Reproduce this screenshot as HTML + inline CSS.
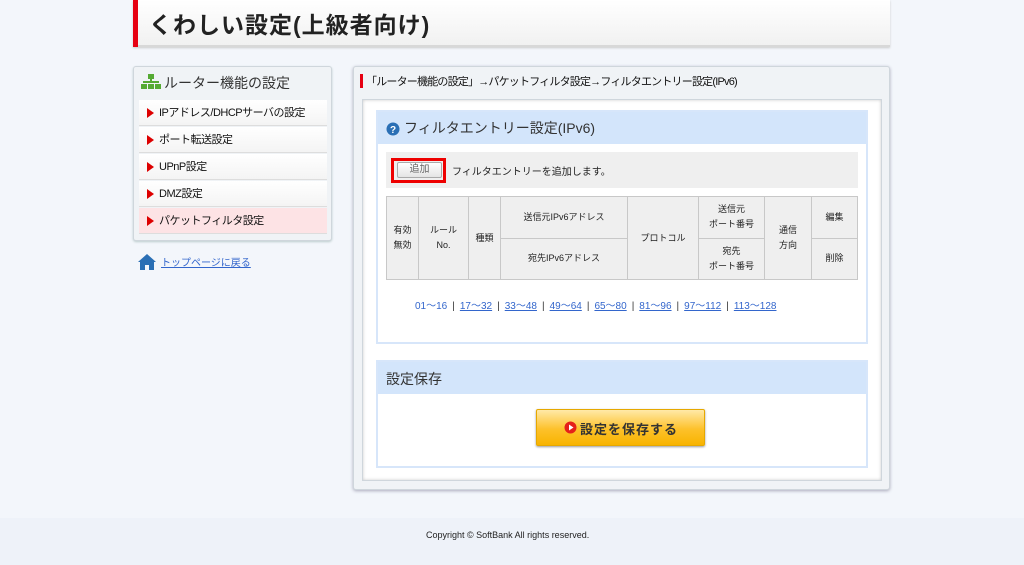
<!DOCTYPE html>
<html><head><meta charset="utf-8"><style>
*{margin:0;padding:0;box-sizing:border-box}
body{width:1024px;height:565px;background:#f3f6fb;font-family:"Liberation Sans","Noto Sans CJK JP",sans-serif;position:relative;overflow:hidden;color:#222}
.a{position:absolute}
.hdr{left:133px;top:0;width:757px;height:47px;background:linear-gradient(#fff,#f1f1f1);border-bottom:2px solid #d8d8d8;box-shadow:0 1px 2px #ccc}
.hdr:before{content:"";position:absolute;left:0;top:0;width:5px;height:47px;background:#e60012}
.hdr span{position:absolute;left:16px;top:6px;font-size:23px;font-weight:bold;color:#222;letter-spacing:1px}
.side{left:133px;top:66px;width:199px;height:175px;background:#f0f3f6;border:1px solid #cfd6dc;border-radius:3px;box-shadow:0 1px 2px #bcc}
.side .t{position:absolute;left:30px;top:6px;font-size:14px;color:#333}
.mi{position:absolute;left:5px;width:188px;height:26px;background:linear-gradient(#fff,#f4f4f4);border-bottom:1px solid #ddd;font-size:11px;line-height:26px;padding-left:20px;color:#111;letter-spacing:-.5px}
.mi:before{content:"";position:absolute;left:8px;top:8px;border-left:7px solid #d00;border-top:5px solid transparent;border-bottom:5px solid transparent}
.main{left:353px;top:66px;width:537px;height:424px;background:#f0f3f6;border:1px solid #cfd6dc;border-radius:3px;box-shadow:0 1px 3px #aab}
.inner{left:8px;top:32px;width:520px;height:382px;background:#fff;border:1px solid #cfd6dc;box-shadow:inset 0 0 3px #ccc}
.sec{border:2px solid #d7e6fa;background:#fff}
.sh{background:#d3e5fb;height:32px}
table{position:absolute;left:386px;top:196px;width:472px;height:84px;border-collapse:collapse;background:#efefef;font-size:9px;text-align:center;color:#222}
td{border:1px solid #c8c8c8;line-height:15px}
.pg{left:415px;top:297px;font-size:10px;color:#36c}
.pg u{color:#36c}
.pg b{font-weight:normal;color:#333;margin:0 5px}
</style></head><body>
<div class="a hdr"><span>くわしい設定(上級者向け)</span></div>

<div class="a side">
<svg class="a" style="left:7px;top:7px" width="20" height="16" viewBox="0 0 20 16"><rect x="7" y="0" width="6" height="5" fill="#5a3"/><rect x="9" y="5" width="2" height="3" fill="#5a3"/><rect x="2" y="7" width="16" height="2" fill="#5a3"/><rect x="0" y="10" width="6" height="5" fill="#5a3"/><rect x="7" y="10" width="6" height="5" fill="#5a3"/><rect x="14" y="10" width="6" height="5" fill="#5a3"/></svg>
<div class="t">ルーター機能の設定</div>
<div class="mi" style="top:33px">IPアドレス/DHCPサーバの設定</div>
<div class="mi" style="top:60px">ポート転送設定</div>
<div class="mi" style="top:87px">UPnP設定</div>
<div class="mi" style="top:114px">DMZ設定</div>
<div class="mi" style="top:141px;background:#fde3e5">パケットフィルタ設定</div>
</div>
<svg class="a" style="left:137px;top:253px" width="20" height="18" viewBox="0 0 20 18"><path d="M10 1 L1 9 L3 9 L3 17 L8 17 L8 12 L12 12 L12 17 L17 17 L17 9 L19 9 Z" fill="#2a6fb5"/></svg>
<div class="a" style="left:161px;top:254px;font-size:10px;color:#36c;text-decoration:underline">トップページに戻る</div>

<div class="a main">
<div class="a" style="left:6px;top:7px;width:3px;height:14px;background:#e60012"></div>
<div class="a" style="left:12px;top:6px;font-size:11px;color:#111;letter-spacing:-.8px">「ルーター機能の設定」→パケットフィルタ設定→フィルタエントリー設定(IPv6)</div>
<div class="a inner"></div>
</div>

<div class="a sec" style="left:376px;top:110px;width:492px;height:234px">
<div class="sh"><svg class="a" style="left:8px;top:10px" width="14" height="14"><circle cx="7" cy="7" r="6.5" fill="#2a6fb5"/><text x="7" y="11" font-size="10" fill="#fff" text-anchor="middle" font-weight="bold" font-family="Liberation Sans">?</text></svg><span class="a" style="left:26px;top:6px;font-size:14px;color:#333">フィルタエントリー設定(IPv6)</span></div>
</div>
<div class="a" style="left:386px;top:152px;width:472px;height:36px;background:#efefef"></div>
<div class="a" style="left:391px;top:158px;width:55px;height:25px;border:3px solid #e00"></div>
<div class="a" style="left:397px;top:162px;width:45px;height:16px;background:linear-gradient(#fff,#e4e4e4);border:1px solid #aaa;border-radius:2px;font-size:10px;color:#666;text-align:center;line-height:14px">追加</div>
<div class="a" style="left:452px;top:163px;font-size:10px;color:#222">フィルタエントリーを追加します。</div>
<table>
<tr><td rowspan="2" style="width:32px">有効<br>無効</td><td rowspan="2" style="width:50px">ルール<br>No.</td><td rowspan="2" style="width:32px">種類</td><td style="width:127px">送信元IPv6アドレス</td><td rowspan="2" style="width:71px">プロトコル</td><td style="width:66px">送信元<br>ポート番号</td><td rowspan="2" style="width:47px">通信<br>方向</td><td>編集</td></tr>
<tr><td>宛先IPv6アドレス</td><td>宛先<br>ポート番号</td><td>削除</td></tr>
</table>
<div class="a pg">01～16<b>|</b><u>17～32</u><b>|</b><u>33～48</u><b>|</b><u>49～64</u><b>|</b><u>65～80</u><b>|</b><u>81～96</u><b>|</b><u>97～112</u><b>|</b><u>113～128</u></div>

<div class="a sec" style="left:376px;top:360px;width:492px;height:108px">
<div class="sh"><span class="a" style="left:8px;top:7px;font-size:14px;color:#333">設定保存</span></div>
</div>
<div class="a" style="left:536px;top:409px;width:169px;height:37px;background:linear-gradient(#ffe9a8,#fdc12a 55%,#f8b400);border:1px solid #e6a800;border-radius:2px;box-shadow:0 1px 2px #999"></div>
<svg class="a" style="left:564px;top:421px" width="13" height="13"><circle cx="6.5" cy="6.5" r="6" fill="#e5201a"/><path d="M5 3.5 L9.5 6.5 L5 9.5Z" fill="#fff"/></svg>
<div class="a" style="left:580px;top:419px;font-size:13px;font-weight:bold;color:#333;letter-spacing:1px">設定を保存する</div>

<div class="a" style="left:0;top:518px;width:1024px;height:47px;background:#eef2f9"></div>
<div class="a" style="left:426px;top:530px;font-size:9px;color:#222">Copyright © SoftBank All rights reserved.</div>
</body></html>
